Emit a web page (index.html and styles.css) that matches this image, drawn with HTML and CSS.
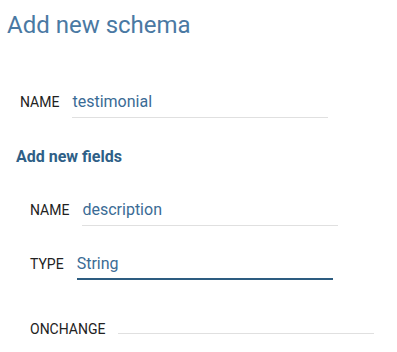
FILE: index.html
```html
<!DOCTYPE html>
<html>
<head>
<meta charset="utf-8">
<link rel="stylesheet" href="styles.css">
</head>
<body>
<h1 class="title">Add new schema</h1>
<div class="row schema-row">
  <span class="label">NAME</span>
  <span class="input">testimonial</span>
</div>
<h2 class="subtitle">Add new fields</h2>
<div class="fields">
  <div class="row">
    <span class="label">NAME</span>
    <span class="input">description</span>
  </div>
  <div class="row">
    <span class="label">TYPE</span>
    <span class="input focused">String</span>
  </div>
  <div class="row">
    <span class="label">ONCHANGE</span>
    <span class="input"></span>
  </div>
</div>
</body>
</html>
```
FILE: styles.css
```css
body {
  margin: 0;
  font-family: Roboto, "Liberation Sans", sans-serif;
  background: #ffffff;
}
.title {
  margin: 0;
  padding: 11px 0 0 7px;
  font-size: 24px;
  line-height: 28px;
  font-weight: 400;
  color: #4a79a3;
}
.row {
  display: flex;
  align-items: baseline;
  gap: 13px;
}
.schema-row {
  margin-top: 53px;
  padding-left: 20px;
}
.label {
  font-size: 14px;
  color: #222222;
}
.input {
  display: block;
  width: 256px;
  height: 20px;
  font-size: 16px;
  line-height: 20px;
  padding-bottom: 5px;
  border-bottom: 1px solid #e0e0e0;
  color: #3a6b95;
}
.input.focused {
  padding-bottom: 4px;
  border-bottom: 2px solid #2d5c80;
}
.subtitle {
  margin: 29px 0 0 0;
  padding-left: 16px;
  font-size: 16px;
  line-height: 20px;
  font-weight: 700;
  color: #2f5f87;
}
.fields {
  margin-top: 33px;
  padding-left: 30px;
  display: flex;
  flex-direction: column;
  gap: 28px;
}
```
